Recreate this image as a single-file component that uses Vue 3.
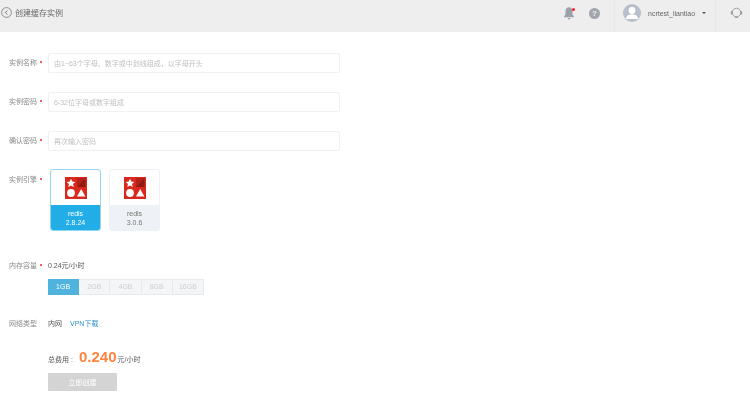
<script setup>
const fields = [
  { label: '实例名称', placeholder: '由1~63个字母、数字或中划线组成\uFF0C以字母开头' },
  { label: '实例密码', placeholder: '6-32位字母或数字组成' },
  { label: '确认密码', placeholder: '再次输入密码' }
]
const engines = [
  { name: 'redis', version: '2.8.24', active: true },
  { name: 'redis', version: '3.0.6', active: false }
]
const sizes = ['1GB', '2GB', '4GB', '8GB', '16GB']
</script>

<template>
  <div class="page">
    <header class="topbar">
      <div class="title">
        <svg class="back" width="11" height="11" viewBox="0 0 11 11">
          <circle cx="5.500" cy="5.500" r="4.900" fill="none" stroke="#777" stroke-width="0.800" />
          <path d="M6.300 3.500 4.300 5.500l2 2" fill="none" stroke="#666" stroke-width="0.900" />
        </svg>
        <span>创建缓存实例</span>
      </div>
      <div class="tools">
        <div class="bell">
          <svg width="12" height="14" viewBox="0 0 12 14">
            <path d="M6 1.200c-2.300 0-3.500 1.800-3.500 4v3.200L1 10.600v.6h10v-.6L9.500 8.400V5.200c0-2.200-1.200-4-3.500-4z" fill="#9aa1a9" />
            <path d="M4.600 12h2.800a1.400 1.400 0 0 1-2.800 0z" fill="#9aa1a9" />
          </svg>
          <i class="bell-dot"></i>
        </div>
        <div class="help">?</div>
        <div class="user">
          <div class="avatar">
            <svg width="18" height="18" viewBox="0 0 18 18">
              <circle cx="9" cy="6.500" r="3.400" fill="#fff" />
              <path d="M3 15c0-3.200 2.400-4.600 6-4.600s6 1.400 6 4.600z" fill="#fff" />
            </svg>
          </div>
          <span class="username">ncrtest_liantiao</span>
          <i class="caret"></i>
        </div>
        <div class="support">
          <svg width="13" height="12" viewBox="0 0 13 12">
            <circle cx="6.500" cy="5.500" r="4.300" fill="none" stroke="#9a9ea4" stroke-width="1" />
            <rect x="0.800" y="4" width="1.900" height="3.600" rx="0.900" fill="#9a9ea4" />
            <rect x="10.300" y="4" width="1.900" height="3.600" rx="0.900" fill="#9a9ea4" />
            <rect x="5" y="9.600" width="3" height="1.300" rx="0.600" fill="#9a9ea4" />
          </svg>
        </div>
      </div>
    </header>

    <main class="form">
      <div v-for="f in fields" :key="f.label" class="row field-row">
        <label class="label req">{{ f.label }}</label>
        <input class="input" type="text" :placeholder="f.placeholder" />
      </div>

      <div class="row engine-row">
        <label class="label req">实例引擎</label>
        <div class="engines">
          <div v-for="e in engines" :key="e.version" class="engine" :class="{ active: e.active }">
            <div class="engine-icon">
              <svg width="22" height="22" viewBox="0 0 22 22">
                <rect width="22" height="22" fill="#d9281e" />
                <path d="M12 1.500h8.500V10H12z" fill="#8f1a12" />
                <path d="M12 1.500h8.500L12 10z" fill="#b3221a" />
                <path d="M6 1.800l1.300 2.700 3 .4-2.200 2 .6 3L6 8.400l-2.700 1.500.6-3-2.200-2 3-.4z" fill="#fff" />
                <circle cx="6" cy="16" r="3.900" fill="#fff" />
                <path d="M16.200 12l4.200 7.500h-8.400z" fill="#fff" />
              </svg>
            </div>
            <div class="engine-foot">
              <div>{{ e.name }}</div>
              <div>{{ e.version }}</div>
            </div>
          </div>
        </div>
      </div>

      <div class="row memory-row">
        <label class="label req">内存容量</label>
        <span class="value">0.24元/小时</span>
      </div>
      <div class="sizes">
        <div v-for="(s, i) in sizes" :key="s" class="size" :class="{ on: i === 0 }">{{ s }}</div>
      </div>

      <div class="row network-row">
        <label class="label">网络类型</label>
        <span class="value">内网</span>
        <a class="vpn">VPN下载</a>
      </div>

      <div class="total">
        <span class="total-label">总费用 :</span>
        <span class="price">0.240</span>
        <span class="unit">元/小时</span>
      </div>
      <button class="create" type="button">立即创建</button>
    </main>
  </div>
</template>

<style>
html, body { margin: 0; background: #fff; }
</style>

<style scoped>
.page {
  width: 750px;
  height: 403px;
  overflow: hidden;
  background: #fff;
  font-family: "Liberation Sans", "Noto Sans CJK SC", sans-serif;
  font-size: 7px;
  color: #666;
  filter: blur(0.45px);
}
.topbar {
  height: 32px;
  background: #eee;
  display: flex;
  justify-content: space-between;
}
.title {
  display: flex;
  align-items: center;
  height: 24px;
  font-size: 8px;
  color: #666;
}
.back { margin: 0 3px 0 1px; }
.tools { display: flex; align-items: flex-start; height: 32px; }
.bell { position: relative; width: 12px; height: 14px; margin-top: 6px; }
.bell-dot {
  position: absolute;
  top: 1.500px;
  right: 0;
  width: 3px;
  height: 3px;
  border-radius: 50%;
  background: #f0202c;
}
.help {
  width: 11px;
  height: 11px;
  margin: 8px 0 0 14px;
  border-radius: 50%;
  background: #a1a6ad;
  color: #eee;
  font-size: 8px;
  font-weight: bold;
  line-height: 11px;
  text-align: center;
}
.user {
  display: flex;
  align-items: center;
  width: 102px;
  height: 32px;
  margin-left: 14px;
  padding: 0 0 6px 8px;
  box-sizing: border-box;
  border-left: 1px solid #e8e8e8;
  border-right: 1px solid #e8e8e8;
}
.avatar {
  width: 18px;
  height: 18px;
  border-radius: 50%;
  background: #b7bfcb;
  display: flex;
}
.username { margin-left: 7px; font-size: 7px; color: #666; }
.caret {
  margin-left: 7px;
  width: 0;
  height: 0;
  border-left: 2px solid transparent;
  border-right: 2px solid transparent;
  border-top: 2px solid #555;
}
.support { width: 34px; padding: 7px 0 0 14px; box-sizing: border-box; }

.form { padding: 21px 0 0 9px; }
.row { display: flex; }
.label {
  width: 39px;
  flex: none;
  color: #888;
  white-space: nowrap;
}
.req::after {
  content: "";
  display: inline-block;
  width: 2px;
  height: 2px;
  margin-left: 3px;
  vertical-align: 2px;
  border-radius: 50%;
  background: #f0202c;
}
.field-row { align-items: center; height: 20px; margin-bottom: 19px; }
.field-row .label { padding-bottom: 2px; }
.input {
  width: 292px;
  height: 20px;
  padding: 0 5px;
  box-sizing: border-box;
  border: 1px solid #eef1f5;
  border-radius: 2px;
  outline: none;
  font: inherit;
  color: #666;
  background: #fff;
}
.input::placeholder { color: #c0c0c0; opacity: 1; }

.engine-row { margin-top: -1px; align-items: flex-start; }
.engine-row .label { padding-top: 5px; }
.engines { display: flex; gap: 8px; margin-left: 2px; }
.engine {
  width: 51px;
  height: 62px;
  box-sizing: border-box;
  border: 1px solid #eef1f5;
  border-radius: 3px;
  overflow: hidden;
  display: flex;
  flex-direction: column;
}
.engine.active { border-color: #8fd6f2; }
.engine-icon { height: 35px; display: flex; justify-content: center; padding-top: 7px; box-sizing: border-box; }
.engine-foot {
  flex: 1;
  background: #eef1f5;
  color: #777;
  text-align: center;
  line-height: 9px;
  padding-top: 4px;
}
.engine.active .engine-foot { background: #22ade6; color: #fff; }

.memory-row { margin-top: 29px; align-items: center; height: 10px; }
.value { color: #555; }
.sizes { display: flex; margin: 9px 0 0 39px; width: 156px; height: 16px; }
.size {
  flex: 1;
  box-sizing: border-box;
  border: 1px solid #e6e9ed;
  border-left-width: 0;
  background: #f4f5f6;
  color: #cfcfcf;
  line-height: 14px;
  text-align: center;
}
.size.on {
  background: #4fb3dd;
  border-color: #4fb3dd;
  color: #fff;
}
.network-row { margin-top: 23px; align-items: center; height: 10px; }
.vpn { margin-left: 8px; color: #2a90c8; }
.total {
  display: flex;
  align-items: baseline;
  margin: 20px 0 0 39px;
  height: 20px;
  color: #555;
}
.total-label { width: 31px; flex: none; white-space: pre; }
.price { font-size: 15px; font-weight: bold; color: #ff8441; }
.unit { margin-left: 1px; }
.create {
  display: block;
  margin: 5px 0 0 39px;
  width: 69px;
  height: 18px;
  border: 0;
  border-radius: 1px;
  background: #d4d4d4;
  color: #fff;
  font: inherit;
  padding: 0;
}
</style>
